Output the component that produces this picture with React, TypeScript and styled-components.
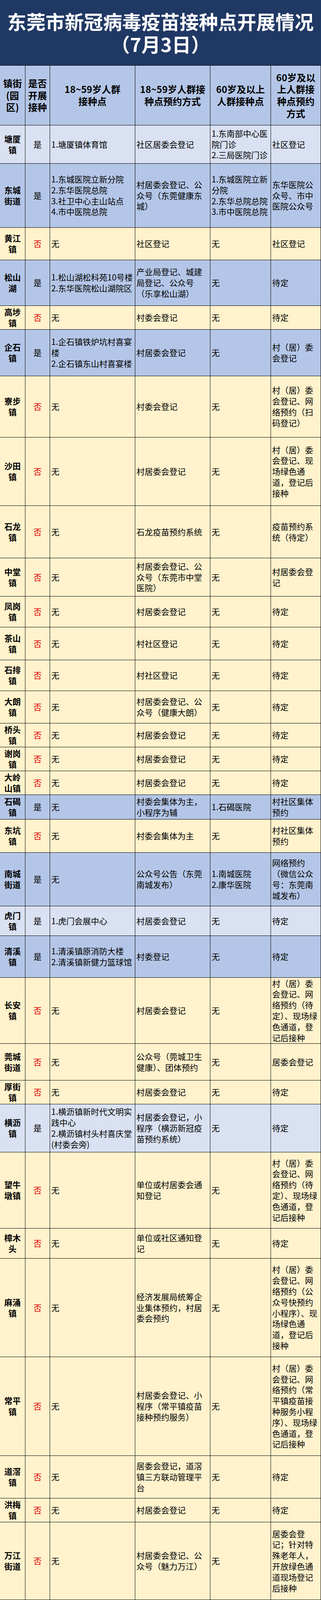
import React from 'react';
import styled, {createGlobalStyle} from 'styled-components';

type Tone = 'blue' | 'pale' | 'yellow';

interface SiteRow {
  name: string;
  open: boolean;
  site: string;
  booking: string;
  elderSite: string;
  elderBooking: string;
  tone: Tone;
  height: number;
}

const FIT = 4096 / 4419;
const COLUMNS = '65px 63px 218px 192px 155px 128px';
const TITLE_HEIGHT = 180;
const HEADER_HEIGHT = 166;

const toneColors: Record<Tone, string> = {
  blue: '#b4c6e7',
  pale: '#d9e1f2',
  yellow: '#fff2cc',
};

const headers: string[][] = [
  ['镇街', '(园', '区)'],
  ['是否', '开展', '接种'],
  ['18~59岁人群', '接种点'],
  ['18~59岁人群接', '种点预约方式'],
  ['60岁及以上', '人群接种点'],
  ['60岁及以', '上人群接', '种点预约', '方式'],
];

const rows: SiteRow[] = [
  {name: '塘厦镇', open: true, site: '1.塘厦镇体育馆', booking: '社区居委会登记', elderSite: '1.东南部中心医院门诊\n2.三局医院门诊', elderBooking: '社区登记', tone: 'pale', height: 106},
  {name: '东城街道', open: true, site: '1.东城医院立新分院\n2.东华医院总院\n3.社卫中心主山站点\n4.市中医院总院', booking: '村居委会登记、公众号（东莞健康东城）', elderSite: '1.东城医院立新分院\n2.东华总院总院\n3.市中医院总院', elderBooking: '东华医院公众号、市中医院公众号', tone: 'blue', height: 177},
  {name: '黄江镇', open: false, site: '无', booking: '社区登记', elderSite: '无', elderBooking: '社区登记', tone: 'yellow', height: 90},
  {name: '松山湖', open: true, site: '1.松山湖松科苑10号楼\n2.东华医院松山湖院区', booking: '产业局登记、城建局登记、公众号（乐享松山湖）', elderSite: '无', elderBooking: '待定', tone: 'blue', height: 126},
  {name: '高埗镇', open: false, site: '无', booking: '村委会登记', elderSite: '无', elderBooking: '待定', tone: 'yellow', height: 66},
  {name: '企石镇', open: true, site: '1.企石镇铁炉坑村喜宴楼\n2.企石镇东山村喜宴楼', booking: '村居委会登记', elderSite: '无', elderBooking: '村（居）委会登记', tone: 'blue', height: 128},
  {name: '寮步镇', open: false, site: '无', booking: '村委会登记', elderSite: '无', elderBooking: '村（居）委会登记、网络预约（扫码登记）', tone: 'yellow', height: 169},
  {name: '沙田镇', open: false, site: '无', booking: '村居委会登记', elderSite: '无', elderBooking: '村（居）委会登记、现场绿色通道，登记后接种', tone: 'yellow', height: 189},
  {name: '石龙镇', open: false, site: '无', booking: '石龙疫苗预约系统', elderSite: '无', elderBooking: '疫苗预约系统（待定）', tone: 'yellow', height: 145},
  {name: '中堂镇', open: false, site: '无', booking: '村居委会登记、公众号（东莞市中堂医院）', elderSite: '无', elderBooking: '村居委会登记', tone: 'yellow', height: 105},
  {name: '凤岗镇', open: false, site: '无', booking: '村居委会登记', elderSite: '无', elderBooking: '待定', tone: 'yellow', height: 86},
  {name: '茶山镇', open: false, site: '无', booking: '村社区登记', elderSite: '无', elderBooking: '待定', tone: 'yellow', height: 90},
  {name: '石排镇', open: false, site: '无', booking: '村社区登记', elderSite: '无', elderBooking: '待定', tone: 'yellow', height: 86},
  {name: '大朗镇', open: false, site: '无', booking: '村居委会登记、公众号（健康大朗）', elderSite: '无', elderBooking: '待定', tone: 'yellow', height: 89},
  {name: '桥头镇', open: false, site: '无', booking: '村居委会登记', elderSite: '无', elderBooking: '待定', tone: 'yellow', height: 66},
  {name: '谢岗镇', open: false, site: '无', booking: '村居委会登记', elderSite: '无', elderBooking: '待定', tone: 'yellow', height: 66},
  {name: '大岭山镇', open: false, site: '无', booking: '村居委会登记', elderSite: '无', elderBooking: '待定', tone: 'yellow', height: 66},
  {name: '石碣镇', open: true, site: '无', booking: '村委会集体为主，小程序为辅', elderSite: '1.石碣医院', elderBooking: '村社区集体预约', tone: 'blue', height: 67},
  {name: '东坑镇', open: false, site: '无', booking: '村委会集体为主', elderSite: '无', elderBooking: '村社区集体预约', tone: 'yellow', height: 92},
  {name: '南城街道', open: true, site: '无', booking: '公众号公告（东莞南城发布）', elderSite: '1.南城医院\n2.康华医院', elderBooking: '网络预约（微信公众号：东莞南城发布）', tone: 'blue', height: 148},
  {name: '虎门镇', open: true, site: '1.虎门会展中心', booking: '村居委会登记', elderSite: '无', elderBooking: '待定', tone: 'pale', height: 82},
  {name: '清溪镇', open: true, site: '1.清溪镇原消防大楼\n2.清溪镇新健力篮球馆', booking: '村委登记', elderSite: '无', elderBooking: '待定', tone: 'blue', height: 115},
  {name: '长安镇', open: false, site: '无', booking: '村居委会登记', elderSite: '无', elderBooking: '村（居）委会登记、网络预约（待定）、现场绿色通道，登记后接种', tone: 'yellow', height: 183},
  {name: '莞城街道', open: false, site: '无', booking: '公众号（莞城卫生健康）、团体预约', elderSite: '无', elderBooking: '居委会登记', tone: 'yellow', height: 101},
  {name: '厚街镇', open: false, site: '无', booking: '村居委会登记', elderSite: '无', elderBooking: '待定', tone: 'yellow', height: 66},
  {name: '横沥镇', open: true, site: '1.横沥镇新时代文明实践中心\n2.横沥镇村头村喜庆堂(村委会旁)', booking: '村居委会登记，小程序（横沥新冠疫苗预约系统）', elderSite: '无', elderBooking: '待定', tone: 'pale', height: 133},
  {name: '望牛墩镇', open: false, site: '无', booking: '单位或村居委会通知登记', elderSite: '无', elderBooking: '村（居）委会登记、网络预约（待定）、现场绿色通道，登记后接种', tone: 'yellow', height: 210},
  {name: '樟木头', open: false, site: '无', booking: '单位或社区通知登记', elderSite: '无', elderBooking: '待定', tone: 'yellow', height: 83},
  {name: '麻涌镇', open: false, site: '无', booking: '经济发展局统筹企业集体预约，村居委会预约', elderSite: '无', elderBooking: '村（居）委会登记、网络预约（公众号快预约小程序）、现场绿色通道，登记后接种', tone: 'yellow', height: 272},
  {name: '常平镇', open: false, site: '无', booking: '村居委会登记、小程序（常平镇疫苗接种预约服务）', elderSite: '无', elderBooking: '村（居）委会登记、网络预约（常平镇疫苗接种服务小程序）、现场绿色通道，登记后接种', tone: 'yellow', height: 273},
  {name: '道滘镇', open: false, site: '无', booking: '居委会登记，道滘镇三方联动管理平台', elderSite: '无', elderBooking: '待定', tone: 'yellow', height: 117},
  {name: '洪梅镇', open: false, site: '无', booking: '村居委会登记', elderSite: '无', elderBooking: '待定', tone: 'yellow', height: 66},
  {name: '万江街道', open: false, site: '无', booking: '村居委会登记、公众号（魅力万江）', elderSite: '无', elderBooking: '居委会登记；针对特殊老年人，开放绿色通道现场登记后接种', tone: 'yellow', height: 215},
];

// squeeze a run of heights while keeping every edge on a whole pixel
const fitHeights = (heights: number[]) => {
  let total = 0;
  let prevEdge = 0;
  return heights.map(h => {
    total += h;
    const edge = Math.round(total * FIT);
    const out = edge - prevEdge;
    prevEdge = edge;
    return out;
  });
};

const [titleHeight, headerHeight, ...rowHeights] = fitHeights([
  TITLE_HEIGHT,
  HEADER_HEIGHT,
  ...rows.map(r => r.height),
]);

// town names sit two characters per line in the narrow first column
const chunkName = (name: string) => name.match(/.{1,2}/g) ?? [name];

const GlobalStyle = createGlobalStyle`
  html, body {
    margin: 0;
    padding: 0;
    background: #ffffff;
  }

  body {
    font-family: 'Noto Sans CJK SC', 'Noto Sans', sans-serif;
    color: #000000;
  }
`;

const Page = styled.div`
  width: 821px;
`;

const TitleBar = styled.header<{$height: number}>`
  height: ${p => p.$height}px;
  box-sizing: border-box;
  padding-top: 25px;
  background: #203864;
  color: #ffffff;
  text-align: center;
`;

const TitleLine = styled.div`
  font-size: 49px;
  line-height: 57.5px;
  font-weight: 700;
  white-space: nowrap;
`;

const Row = styled.div<{$tone: Tone; $height: number}>`
  display: grid;
  grid-template-columns: ${COLUMNS};
  height: ${p => p.$height}px;
  box-sizing: border-box;
  border-bottom: 1px solid #000000;
  background: ${p => toneColors[p.$tone]};
`;

const HeaderRow = styled(Row)`
  border-top: 1px solid #000000;
`;

const Cell = styled.div`
  display: flex;
  align-items: center;
  box-sizing: border-box;
  border-right: 1px solid #000000;
  min-width: 0;
  overflow: hidden;
`;

const HeadCell = styled(Cell)`
  justify-content: center;
  text-align: center;
  font-size: 24px;
  line-height: 30.6px;
  font-weight: 700;
`;

const NameCell = styled(Cell)`
  justify-content: center;
  text-align: center;
  font-size: 21px;
  line-height: 27.8px;
  font-weight: 700;
`;

const FlagCell = styled(Cell)<{$open: boolean}>`
  justify-content: center;
  font-size: 21px;
  line-height: 27.8px;
  color: ${p => (p.$open ? '#000000' : '#e00000')};
`;

const TextCell = styled(Cell)`
  padding: 0 2px 0 3px;
  font-size: 21px;
  line-height: 27.8px;
`;

const CellText = styled.div`
  white-space: pre-line;
`;

const Lines = ({lines}: {lines: string[]}) => (
  <div>
    {lines.map(line => (
      <div key={line}>{line}</div>
    ))}
  </div>
);

export default function App() {
  return (
    <Page>
      <GlobalStyle />
      <TitleBar $height={titleHeight}>
        <TitleLine>东莞市新冠病毒疫苗接种点开展情况</TitleLine>
        <TitleLine>（7月3日）</TitleLine>
      </TitleBar>
      <HeaderRow $tone="blue" $height={headerHeight}>
        {headers.map(lines => (
          <HeadCell key={lines.join('')}>
            <Lines lines={lines} />
          </HeadCell>
        ))}
      </HeaderRow>
      {rows.map((row, i) => (
        <Row key={row.name} $tone={row.tone} $height={rowHeights[i]}>
          <NameCell>
            <Lines lines={chunkName(row.name)} />
          </NameCell>
          <FlagCell $open={row.open}>{row.open ? '是' : '否'}</FlagCell>
          <TextCell>
            <CellText>{row.site}</CellText>
          </TextCell>
          <TextCell>
            <CellText>{row.booking}</CellText>
          </TextCell>
          <TextCell>
            <CellText>{row.elderSite}</CellText>
          </TextCell>
          <TextCell>
            <CellText>{row.elderBooking}</CellText>
          </TextCell>
        </Row>
      ))}
    </Page>
  );
}
